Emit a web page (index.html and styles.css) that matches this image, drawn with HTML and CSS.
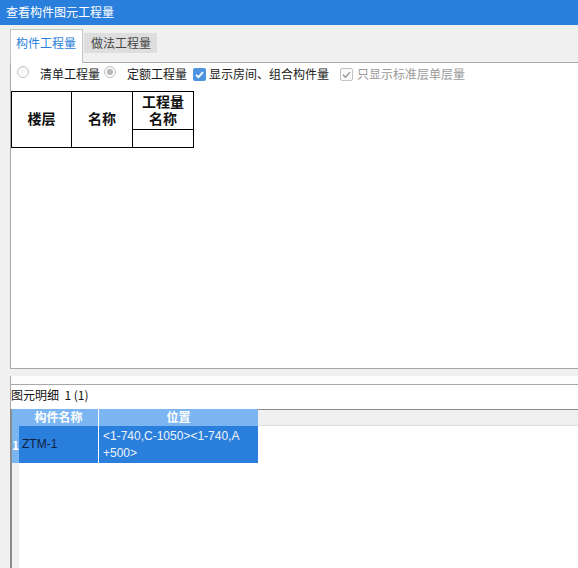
FILE: index.html
```html
<!DOCTYPE html>
<html>
<head>
<meta charset="utf-8">
<link rel="stylesheet" href="styles.css">
</head>
<body>
<div class="window">
  <div class="titlebar">查看构件图元工程量</div>
  <div class="tabs">
    <div class="tab active">构件工程量</div>
    <div class="tab">做法工程量</div>
  </div>
  <div class="panel">
    <div class="options">
      <span class="radio r1"></span><span class="lbl l1">清单工程量</span>
      <span class="radio r2 checked"></span><span class="lbl l2">定额工程量</span>
      <span class="check c1"><svg viewBox="0 0 13 13" width="13" height="13"><path d="M3 6.8 L5.4 9.2 L10 4.2" fill="none" stroke="#fff" stroke-width="1.8"/></svg></span><span class="lbl l3">显示房间、组合构件量</span>
      <span class="check c2"><svg viewBox="0 0 13 13" width="13" height="13"><path d="M3 6.8 L5.4 9.2 L10 4.2" fill="none" stroke="#9a9a9a" stroke-width="1.4"/></svg></span><span class="lbl l4 disabled">只显示标准层单层量</span>
    </div>
    <table class="qty">
      <tr class="h1">
        <td rowspan="2" class="w1">楼层</td>
        <td rowspan="2" class="w2">名称</td>
        <td class="w3"><div class="hl">工程量</div><div class="hl">名称</div></td>
      </tr>
      <tr class="h2"><td></td></tr>
    </table>
  </div>
  <div class="split-gray"></div>
  <div class="split-white"></div>
  <div class="detail-label">图元明细&nbsp;&nbsp;1 (1)</div>
  <div class="grid">
    <div class="grow ghead">
      <div class="rh"></div>
      <div class="c col1">构件名称</div>
      <div class="sep"></div>
      <div class="c col2">位置</div>
      <div class="rest"></div>
    </div>
    <div class="grow gdata">
      <div class="rh">1</div>
      <div class="c col1 name">ZTM-1</div>
      <div class="sep"></div>
      <div class="c col2 pos"><div>&lt;1-740,C-1050&gt;&lt;1-740,A</div><div>+500&gt;</div></div>
      <div class="rest"></div>
    </div>
    <div class="gfill">
      <div class="rh"></div>
      <div class="rest"></div>
    </div>
  </div>
</div>
</body>
</html>
```
FILE: styles.css
```css
html, body {
  margin: 0;
  padding: 0;
}
body {
  width: 578px;
  height: 568px;
  overflow: hidden;
  background: #f0f0f0;
  font-family: "Noto Sans CJK SC", "Microsoft YaHei", sans-serif;
  font-size: 12px;
  color: #1a1a1a;
}
.window {
  display: flex;
  flex-direction: column;
  height: 568px;
}
.titlebar {
  height: 25px;
  line-height: 24px;
  background: #2b7fdc;
  color: #fff;
  padding-left: 6px;
  font-size: 12px;
}
.tabs {
  height: 37px;
  display: flex;
  align-items: flex-start;
  padding-left: 10px;
  position: relative;
  z-index: 2;
}
.tab {
  box-sizing: border-box;
}
.tab.active {
  margin-top: 4px;
  width: 73px;
  height: 34px;
  background: #fff;
  border: 1px solid #c4c4c4;
  border-bottom: none;
  color: #2b7fdc;
  padding-left: 5px;
  line-height: 26px;
}
.tab:not(.active) {
  margin-top: 8px;
  margin-left: 1px;
  width: 73px;
  height: 20px;
  background: #dedede;
  color: #444;
  padding-left: 7px;
  line-height: 20px;
}
.panel {
  margin-left: 10px;
  height: 305px;
  background: #fff;
  border-left: 1px solid #a8a8a8;
  border-top: 1px solid #a8a8a8;
  border-bottom: 1px solid #a8a8a8;
}
.options {
  height: 22px;
  display: flex;
  align-items: center;
  white-space: nowrap;
}
.radio {
  box-sizing: border-box;
  width: 12px;
  height: 12px;
  border-radius: 50%;
  border: 1px solid #c3c3c3;
  background: linear-gradient(#f4f4f4, #fff);
  margin-top: -4px;
  position: relative;
}
.radio.checked::after {
  content: "";
  position: absolute;
  left: 2px;
  top: 2px;
  width: 6px;
  height: 6px;
  border-radius: 50%;
  background: #b8b8b8;
}
.r1 { margin-left: 6px; }
.l1 { margin-left: 11px; }
.r2 { margin-left: 4px; }
.l2 { margin-left: 11px; }
.check {
  box-sizing: border-box;
  width: 13px;
  height: 13px;
  border-radius: 2px;
  display: inline-flex;
}
.c1 {
  margin-left: 6px;
  background: #4f93e3;
}
.l3 { margin-left: 3px; }
.c2 {
  margin-left: 11px;
  border: 1px solid #c2c2c2;
  background: #fafafa;
}
.c2 svg { margin: -1px; }
.l4 { margin-left: 4px; }
.disabled { color: #9a9a9a; }
.lbl { line-height: 22px; }

.qty {
  margin-top: 6px;
  border-collapse: collapse;
  font-family: "Liberation Sans", "Noto Sans CJK SC", sans-serif;
  font-size: 14px;
  font-weight: bold;
  color: #111;
}
.qty td {
  border: 1px solid #000;
  padding: 0;
  text-align: center;
  line-height: 17px;
}
.qty .hl {
  height: 17px;
  line-height: 17px;
}
.w1 { width: 59px; }
.w2 { width: 60px; }
.w3 { width: 60px; }
.h1 { height: 38px; }
.h2 { height: 18px; }

.split-gray {
  height: 7px;
  margin-left: 11px;
  background: #f0f0f0;
}
.split-white {
  height: 8px;
  margin-left: 10px;
  border-left: 1px solid #a8a8a8;
  background: #fdfdfd;
  border-bottom: 1px solid #a8a8a8;
}
.detail-label {
  height: 24px;
  line-height: 19px;
  margin-left: 10px;
  border-left: 1px solid #a8a8a8;
  background: #fff;
  color: #111;
}
.grid {
  flex: 1;
  display: flex;
  flex-direction: column;
  margin-left: 10px;
  border-left: 2px solid #8c8c8c;
}
.grow {
  display: flex;
}
.rh {
  width: 7px;
  flex: none;
  background: #7bb6f2;
  color: #fff;
  font-weight: bold;
  font-size: 12px;
  text-align: center;
  line-height: 37px;
  overflow: hidden;
}
.sep {
  width: 1px;
  background: #fff;
}
.col1 { width: 79px; flex: none; }
.col2 { width: 159px; flex: none; }
.rest { flex: 1; }
.ghead {
  height: 17px;
}
.ghead .c {
  background: #7bb6f2;
  color: #fff;
  font-weight: bold;
  text-align: center;
  line-height: 16px;
}
.ghead .rest {
  box-sizing: border-box;
  background: #f0f0f0;
  border-top: 1px solid #8c8c8c;
  border-bottom: 1px solid #dcdcdc;
}
.gdata {
  height: 37px;
}
.gdata .c {
  background: #2b7fdc;
}
.name {
  font-family: "Liberation Sans", Arial, sans-serif;
  color: #0f1e3c;
  font-size: 12px;
  line-height: 37px;
  padding-left: 3px;
  box-sizing: border-box;
}
.pos {
  font-family: "Liberation Sans", Arial, sans-serif;
  color: #eef3fa;
  font-size: 12px;
  line-height: 17px;
  padding: 2px 0 0 4px;
  box-sizing: border-box;
}
.pos div {
  height: 17px;
  white-space: nowrap;
}
.gdata .rest {
  background: #fff;
}
.gfill {
  flex: 1;
  display: flex;
}
.gfill .rh {
  background: #f0f0f0;
}
.gfill .rest {
  background: #fff;
}
```
